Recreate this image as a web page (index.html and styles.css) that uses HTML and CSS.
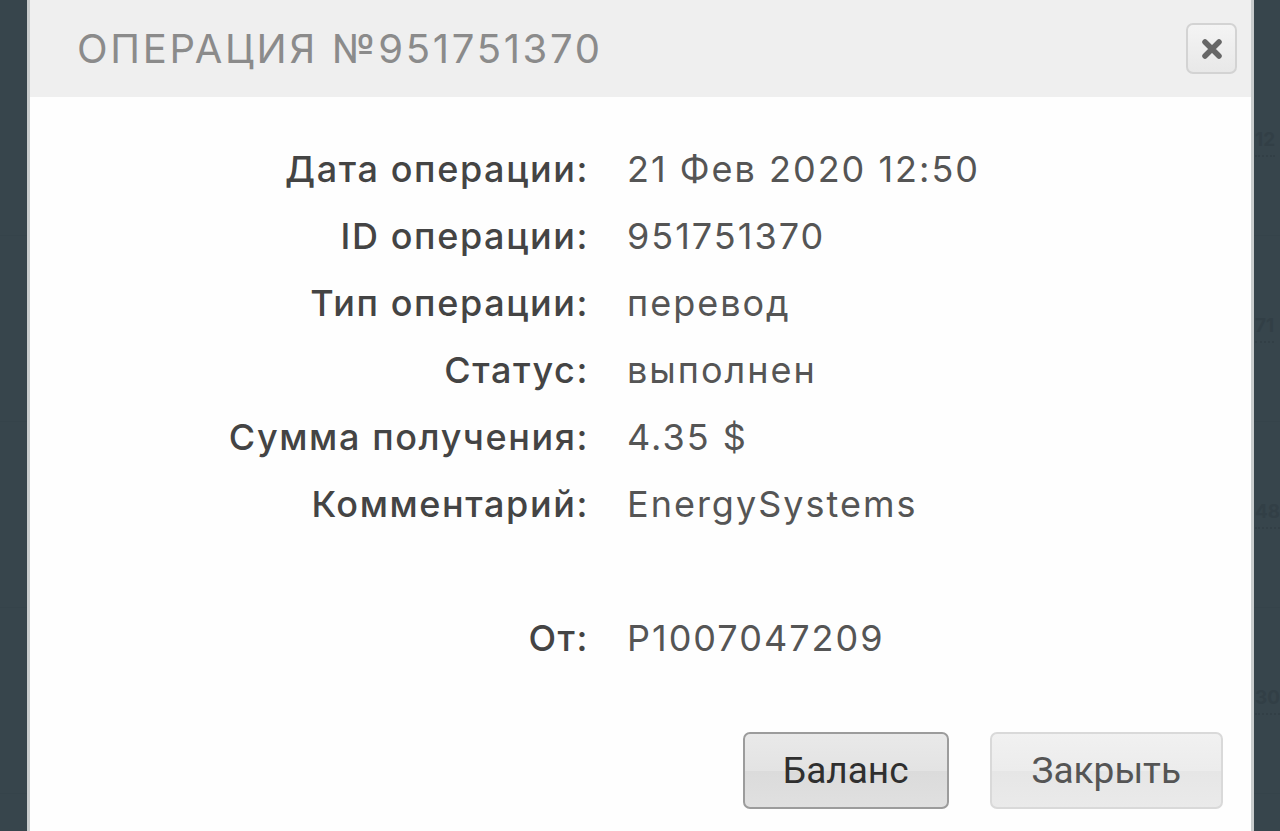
FILE: index.html
```html
<!DOCTYPE html>
<html>
<head>
    <title>Операция №951751370</title>
    <link rel="stylesheet" href="styles.css">
</head>
<body>
    <div class="page">
        <div class="bg-row"><span class="bg-num">12</span></div>
        <div class="bg-row"><span class="bg-num">71</span></div>
        <div class="bg-row"><span class="bg-num">48</span></div>
        <div class="bg-row"><span class="bg-num">30</span></div>
    </div>

    <div class="modal">
        <div class="modal-header">
            <h1 class="modal-title">Операция №951751370</h1>
            <button class="close-btn" title="Закрыть">
                <svg width="22" height="22" viewBox="0 0 22 22">
                    <path d="M4 4 L18 18 M18 4 L4 18" stroke="#676767" stroke-width="5.5" stroke-linecap="round"/>
                </svg>
            </button>
        </div>

        <div class="modal-body">
            <div class="details">
                <div class="label">Дата операции:</div>
                <div class="value">21 Фев 2020 12:50</div>

                <div class="label">ID операции:</div>
                <div class="value">951751370</div>

                <div class="label">Тип операции:</div>
                <div class="value">перевод</div>

                <div class="label">Статус:</div>
                <div class="value">выполнен</div>

                <div class="label">Сумма получения:</div>
                <div class="value">4.35 $</div>

                <div class="label">Комментарий:</div>
                <div class="value">EnergySystems</div>

                <div class="label"></div>
                <div class="value"></div>

                <div class="label">От:</div>
                <div class="value">P1007047209</div>
            </div>

            <div class="actions">
                <button class="btn btn-primary">Баланс</button>
                <button class="btn">Закрыть</button>
            </div>
        </div>
    </div>
</body>
</html>
```

FILE: styles.css
```css
body {
    background-color: #37454c;
    margin: 0;
    padding: 0;
    height: 831px;
    overflow: hidden;
    font-family: 'Inter', 'Noto Sans', sans-serif;
}

.page {
    padding-top: 50px;
}

.bg-row {
    height: 185px;
    border-bottom: 1px solid #35434a;
    display: flex;
    align-items: center;
    padding-left: 1255px;
    white-space: nowrap;
}

.bg-num {
    color: #323f46;
    font-size: 19px;
    font-weight: bold;
    border-bottom: 2px dotted #323f46;
    padding-bottom: 4px;
}

.modal {
    position: absolute;
    top: 0;
    left: 27px;
    width: 1221px;
    height: 831px;
    background-color: #fefefe;
    border: 3px solid #c8cccd;
    border-top: none;
    border-bottom: none;
}

.modal-header {
    display: flex;
    justify-content: space-between;
    align-items: center;
    height: 97px;
    padding: 0 14px 0 47px;
    background-color: #efefef;
}

.modal-title {
    margin: 0;
    color: #8b8b8b;
    font-size: 40px;
    font-weight: normal;
    text-transform: uppercase;
    letter-spacing: 2.7px;
}

.close-btn {
    width: 51px;
    height: 51px;
    padding: 0;
    display: flex;
    align-items: center;
    justify-content: center;
    background: linear-gradient(#f4f4f4, #e8e8e8);
    border: 2px solid #d3d3d3;
    border-radius: 7px;
}

.modal-body {
    padding-top: 39px;
}

.details {
    display: grid;
    grid-template-columns: 559px 1fr;
    column-gap: 38px;
    grid-auto-rows: 67px;
    align-items: center;
    font-size: 36px;
}

.label {
    text-align: right;
    color: #444;
    font-weight: 500;
    letter-spacing: 1.6px;
    height: 67px;
    line-height: 67px;
}

.value {
    color: #555;
    letter-spacing: 2px;
    height: 67px;
    line-height: 67px;
}

.actions {
    display: flex;
    justify-content: flex-end;
    gap: 41px;
    padding-right: 28px;
    margin-top: 60px;
}

.btn {
    height: 77px;
    padding: 0 40px;
    font-family: Roboto, sans-serif;
    font-size: 37px;
    color: #555;
    background: linear-gradient(#f1f1f1 0%, #ececec 50%, #e6e6e6 51%, #eaeaea 100%);
    border: 2px solid #d9d9d9;
    border-radius: 7px;
}

.btn-primary {
    color: #2f2f2f;
    padding: 0 38px;
    background: linear-gradient(#e9e9e9 0%, #e3e3e3 50%, #dbdbdb 51%, #e0e0e0 100%);
    border-color: #9c9c9c;
}
```
